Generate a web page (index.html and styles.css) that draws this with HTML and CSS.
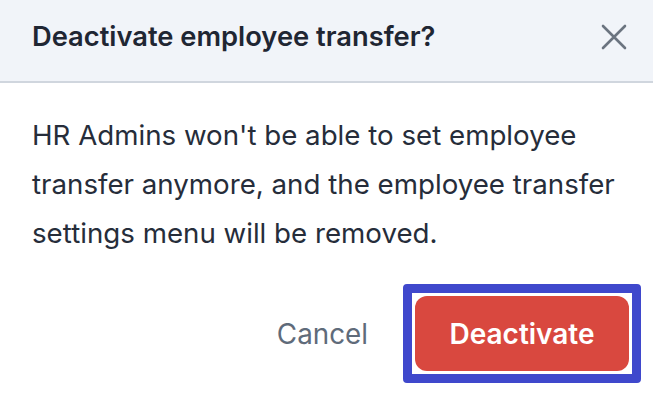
FILE: index.html
```html
<!DOCTYPE html>
<html>
<head>
<meta charset="utf-8">
<link rel="stylesheet" href="styles.css">
</head>
<body>
<div class="dialog">
  <div class="header">
    <h1 class="title">Deactivate employee transfer?</h1>
    <button class="close" aria-label="Close">
      <svg width="26" height="26" viewBox="0 0 26 26"><path d="M2 2 L24 24 M24 2 L2 24" stroke="#6b7480" stroke-width="2.6" stroke-linecap="round" fill="none"/></svg>
    </button>
  </div>
  <div class="body">
    <p class="text">HR Admins won't be able to set employee transfer anymore, and the employee transfer settings menu will be removed.</p>
  </div>
  <div class="footer">
    <button class="cancel">Cancel</button>
    <div class="focus-ring">
      <button class="danger">Deactivate</button>
    </div>
  </div>
</div>
</body>
</html>
```
FILE: styles.css
```css
* { box-sizing: border-box; }
html, body { margin: 0; padding: 0; background: #ffffff; }
body { font-family: Inter, "Noto Sans", sans-serif; width: 653px; height: 405px; overflow: hidden; }
.dialog { display: flex; flex-direction: column; }
.header {
  height: 83px;
  background: #f1f4f9;
  border-bottom: 2px solid #d0d6de;
  display: flex;
  align-items: center;
  justify-content: space-between;
  padding: 0 26px 8px 32px;
}
.title { margin: 0; font-size: 27.3px; font-weight: 600; color: #1f2633; letter-spacing: 0; }
.close { background: none; border: 0; padding: 0; width: 26px; height: 26px; display: flex; cursor: pointer; }
.body { padding: 28px 32px 0 32px; }
.text { margin: 0; font-size: 27.7px; line-height: 49px; color: #262d3a; }
.footer {
  display: flex;
  justify-content: flex-end;
  align-items: center;
  padding: 26px 12px 0 0;
  gap: 35px;
}
.cancel { background: none; border: 0; padding: 0; font-family: inherit; font-size: 27.8px; color: #5f6b7a; }
.focus-ring { border: 9px solid #3f48cc; border-radius: 4px; padding: 3px; background: #fff; display: flex; }
.danger {
  width: 214px; height: 75px;
  border: 0; border-radius: 12px;
  background: #d9483f; color: #ffffff;
  font-family: inherit; font-size: 28px; font-weight: 600;
}
```
